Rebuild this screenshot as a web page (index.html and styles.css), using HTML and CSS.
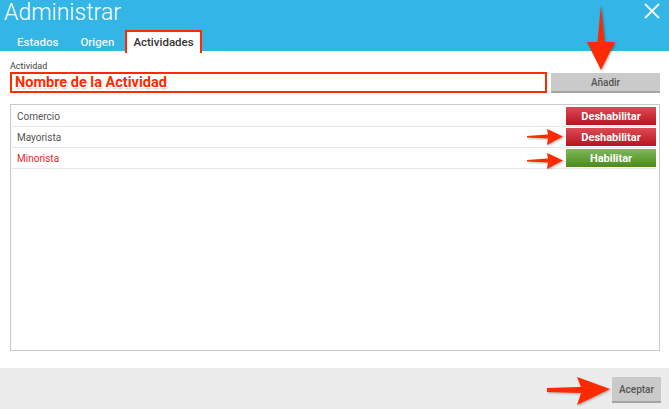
FILE: index.html
```html
<!DOCTYPE html>
<html lang="es">
<head>
    <meta charset="utf-8">
    <title>Administrar</title>
    <link rel="stylesheet" href="styles.css">
</head>
<body>
    <div class="dialog">
        <div class="dialog-header">
            <div class="title-row">
                <h1>Administrar</h1>
                <span class="close">
                    <svg width="18" height="18" viewBox="0 0 18 18"><path d="M2 2 L16 16 M16 2 L2 16" stroke="#e8f6fc" stroke-width="2" fill="none"/></svg>
                </span>
            </div>
            <div class="tabs">
                <span class="tab">Estados</span>
                <span class="tab">Origen</span>
                <span class="tab active">Actividades</span>
            </div>
        </div>

        <div class="dialog-body">
            <label class="field-label">Actividad</label>
            <div class="add-row">
                <div class="name-input">Nombre de la Actividad</div>
                <button class="btn-gray add-btn">Añadir</button>
            </div>

            <div class="list">
                <div class="list-row">
                    <span class="item">Comercio</span>
                    <button class="toggle off">Deshabilitar</button>
                </div>
                <div class="list-row">
                    <span class="item">Mayorista</span>
                    <button class="toggle off">Deshabilitar</button>
                </div>
                <div class="list-row">
                    <span class="item disabled">Minorista</span>
                    <button class="toggle on">Habilitar</button>
                </div>
            </div>
        </div>

        <div class="dialog-footer">
            <button class="btn-gray ok-btn">Aceptar</button>
        </div>

        <!-- annotation arrows -->
        <svg class="arrow arrow-down" width="34" height="72" viewBox="0 0 34 72">
            <path d="M17 3 L20.5 40 L31 40 L17 68 L3 40 L13.5 40 Z" fill="#ff2a00"/>
        </svg>
        <svg class="arrow arrow-row2" width="40" height="20" viewBox="0 0 40 20">
            <path d="M1 9 L22 7.5 L21 2 L37 9.5 L21 18 L22 11.5 L1 10.5 Z" fill="#ff2a00"/>
        </svg>
        <svg class="arrow arrow-row3" width="40" height="20" viewBox="0 0 40 20">
            <path d="M1 9 L22 7.5 L21 2 L37 9.5 L21 18 L22 11.5 L1 10.5 Z" fill="#ff2a00"/>
        </svg>
        <svg class="arrow arrow-ok" width="66" height="32" viewBox="0 0 66 32">
            <path d="M1 13 L35 12 L31 2 L64 14 L31 30 L35 18 L1 17 Z" fill="#ff2a00"/>
        </svg>
    </div>
</body>
</html>
```

FILE: styles.css
```css
html, body {
    margin: 0;
    padding: 0;
}
body {
    font-family: Roboto, "Liberation Sans", sans-serif;
    background-color: #fff;
    width: 669px;
    height: 409px;
    overflow: hidden;
}
.dialog {
    position: relative;
    width: 669px;
    height: 409px;
    display: flex;
    flex-direction: column;
}
.dialog-header {
    background-color: #33b5e5;
    height: 51px;
    box-sizing: border-box;
}
.title-row {
    display: flex;
    justify-content: space-between;
    align-items: flex-start;
}
h1 {
    margin: 0;
    padding: 0 0 0 4px;
    font-weight: 300;
    font-size: 23px;
    line-height: 25px;
    color: #fff;
}
.close {
    margin: 2px 8px 0 0;
    display: flex;
}
.tabs {
    display: flex;
    padding-left: 6px;
    margin-top: 5px;
}
.tab {
    font-size: 11.5px;
    font-weight: 500;
    color: #e9f7fd;
    padding: 0 9px;
    line-height: 17px;
    border: 2px solid transparent;
    border-bottom: 0;
    margin-top: 2px;
}
.tab.active {
    background-color: #fff;
    color: #333;
    border-color: #ff2a00;
    border-bottom: 0;
    margin: 0 0 0 0;
    padding: 2px 6px 2px 6px;
}
.dialog-body {
    flex: 1;
    padding: 9px 9px 0 10px;
}
.field-label {
    display: block;
    font-size: 9px;
    color: #444;
    line-height: 12px;
}
.add-row {
    display: flex;
    gap: 4px;
    align-items: flex-start;
}
.name-input {
    width: 537px;
    height: 21px;
    box-sizing: border-box;
    border: 2px solid #ff2a00;
    padding-left: 3px;
    font-size: 14.5px;
    font-weight: 700;
    line-height: 17px;
    color: #ff2a00;
    text-shadow: 1px 1px 0 #fff, -1px -1px 0 #fff, 1px -1px 0 #fff, -1px 1px 0 #fff, 1px 2px 2px rgba(0,0,0,0.25);
}
.btn-gray {
    font-family: Roboto, "Liberation Sans", sans-serif;
    background-color: #cacaca;
    border: 0;
    border-bottom: 2px solid #a5a5a5;
    color: #555;
    font-size: 10px;
    font-weight: 500;
    padding: 0;
}
.add-btn {
    width: 109px;
    height: 20px;
    margin-top: 1px;
}
.list {
    margin-top: 11px;
    border: 1px solid #c9c9c9;
    height: 247px;
    box-sizing: border-box;
    padding: 1px 3px 0 1px;
}
.list-row {
    display: flex;
    justify-content: space-between;
    align-items: center;
    height: 21px;
    border-bottom: 1px solid #e6e6e6;
    box-sizing: border-box;
    padding-left: 5px;
}
.item {
    font-size: 10px;
    color: #555;
}
.item.disabled {
    color: #e32a2a;
}
.toggle {
    font-family: Roboto, "Liberation Sans", sans-serif;
    width: 90px;
    height: 18px;
    border: 0;
    padding: 0;
    color: #fff;
    font-size: 11px;
    font-weight: 700;
}
.toggle.off {
    background: linear-gradient(#dc4a55, #b71420);
}
.toggle.on {
    background: linear-gradient(#7db85c, #4a8b1a);
}
.dialog-footer {
    background-color: #ececec;
    height: 41px;
    display: flex;
    justify-content: flex-end;
    align-items: flex-start;
    padding-right: 8px;
}
.ok-btn {
    width: 49px;
    height: 26px;
    margin-top: 9px;
}
.arrow {
    position: absolute;
    filter: drop-shadow(1px 1px 1px rgba(0,0,0,0.3));
}
.arrow-down {
    left: 584px;
    top: 2px;
}
.arrow-row2 {
    left: 526px;
    top: 127px;
}
.arrow-row3 {
    left: 526px;
    top: 151px;
}
.arrow-ok {
    left: 546px;
    top: 375px;
}
```
